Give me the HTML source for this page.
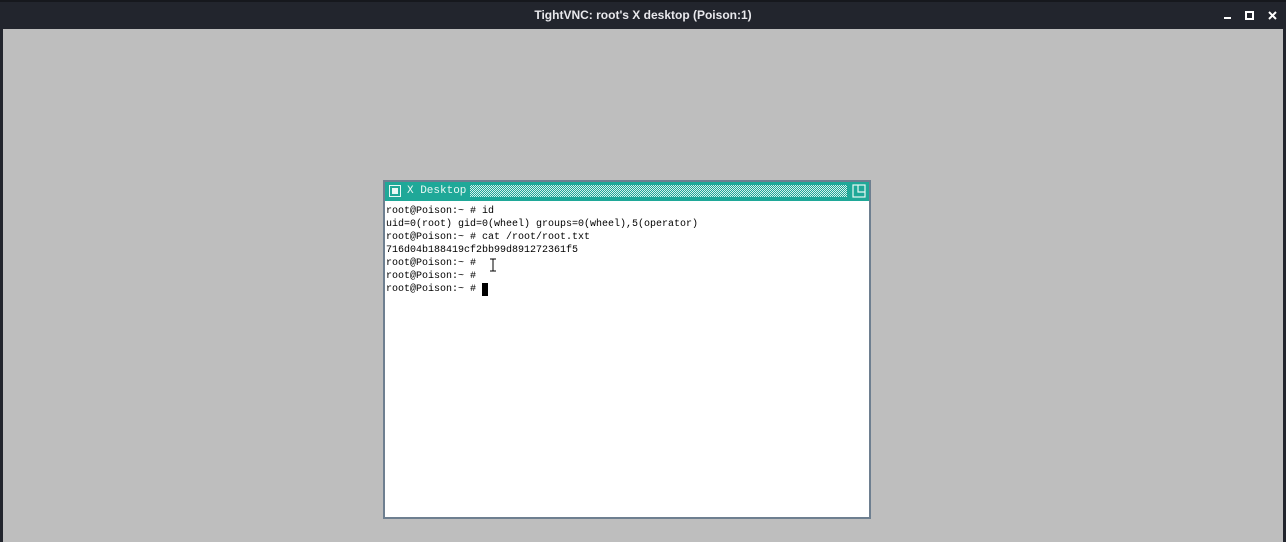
<!DOCTYPE html>
<html><head><style>
body{margin:0;width:1286px;height:542px;background:#22252d;position:relative;overflow:hidden;font-family:"Liberation Sans",sans-serif}
.top{position:absolute;left:0;top:0;width:1286px;height:2px;background:#16181d}
.title{position:absolute;top:8px;left:0;width:1286px;text-align:center;color:#e8e8ec;font-weight:bold;font-size:12px}
.gray{position:absolute;left:3px;top:29px;width:1280px;height:513px;background:#bebebe}
.win{position:absolute;left:383px;top:180px;width:484px;height:335px;border:2px solid #6e7f90;background:#fff}
.tb{position:absolute;left:0;top:0;width:484px;height:19px;background:#1fa898}
.chk{position:absolute;left:85px;top:3px;width:377px;height:12px;background-color:#1fa898;background-image:repeating-conic-gradient(#d8f0ec 0 25%,#1fa898 0 50%);background-size:2px 2px}
.term{position:absolute;left:1px;top:23px;font-family:"Liberation Mono",monospace;font-size:10px;line-height:13px;color:#000;white-space:pre}
.cur{position:absolute;left:97px;top:101px;width:6px;height:13px;background:#000}
</style></head><body>
<div class="top"></div>
<div class="title">TightVNC: root's X desktop (Poison:1)</div>
<svg style="position:absolute;left:1215px;top:8px" width="62" height="14">
<rect x="9" y="9" width="7" height="2" fill="#fff"/>
<rect x="31" y="4" width="7" height="7" fill="none" stroke="#fff" stroke-width="2"/>
<path d="M54 4 L61 11 M61 4 L54 11" stroke="#fff" stroke-width="2"/>
</svg>
<div class="gray"></div>
<div class="win">
<div class="tb">
<svg style="position:absolute;left:4px;top:3px" width="12" height="12"><rect x="0.5" y="0.5" width="11" height="11" fill="none" stroke="#e8f8f4"/><rect x="3" y="3" width="6" height="6" fill="#e8f8f4"/></svg>
<span style="position:absolute;left:22px;top:3px;font-family:'Liberation Mono',monospace;font-size:11px;color:#e8f8f4">X Desktop</span>
<div class="chk"></div>
<svg style="position:absolute;left:467px;top:2px" width="14" height="14"><rect x="1" y="1" width="12" height="12" fill="none" stroke="#e8f8f4" stroke-width="1.2"/><path d="M6 1 V8 H13" fill="none" stroke="#e8f8f4" stroke-width="1.2"/></svg>
</div>
<div class="term">root@Poison:~ # id
uid=0(root) gid=0(wheel) groups=0(wheel),5(operator)
root@Poison:~ # cat /root/root.txt
716d04b188419cf2bb99d891272361f5
root@Poison:~ #
root@Poison:~ #
root@Poison:~ #</div>
<div class="cur"></div>
<svg style="position:absolute;left:104px;top:76px" width="8" height="14"><path d="M1 1H7M4 1V13M1 13H7" stroke="#000" fill="none"/></svg>
</div>
</body></html>
